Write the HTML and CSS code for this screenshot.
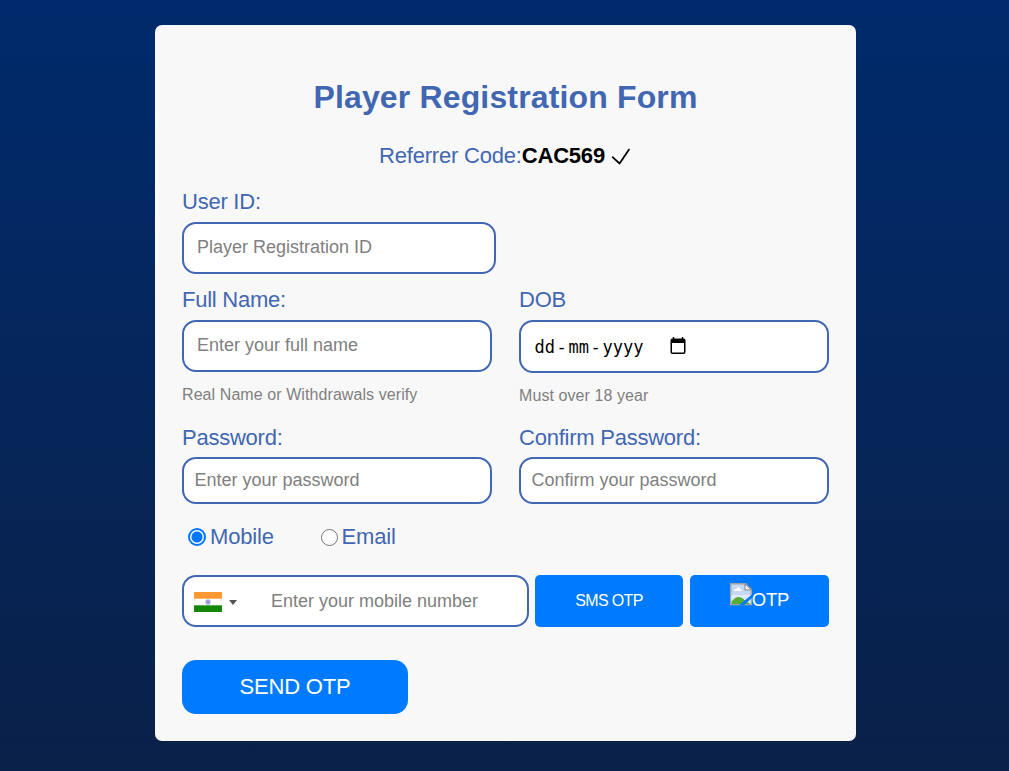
FILE: index.html
```html
<!DOCTYPE html>
<html lang="en">
<head>
<meta charset="utf-8">
<title>Player Registration Form</title>
<link rel="stylesheet" href="styles.css">
</head>
<body>
<form class="card">
  <h1 class="title">Player Registration Form</h1>
  <p class="referrer">Referrer Code:<b class="code">CAC569</b><svg class="check" width="20" height="18" viewBox="0 0 20 18"><path d="M1.600 9.200L8.600 15.500L18 1.500" fill="none" stroke="#000" stroke-width="1.700" stroke-linecap="round" stroke-linejoin="round"/></svg></p>
  <div class="field user">
    <label class="label">User ID:</label>
    <input class="input" type="text" placeholder="Player Registration ID">
  </div>
  <div class="row names">
    <div class="field">
      <label class="label">Full Name:</label>
      <input class="input" type="text" placeholder="Enter your full name">
      <span class="hint">Real Name or Withdrawals verify</span>
    </div>
    <div class="field">
      <label class="label">DOB</label>
      <div class="input date"><span>dd</span><span class="dash">-</span><span>mm</span><span class="dash">-</span><span>yyyy</span><svg class="calendar" width="16" height="18" viewBox="0 0 16 18"><path d="M3.500 0v3M12.500 0v3" stroke="#000" stroke-width="1.500"/><rect x="1.250" y="2.300" width="13.500" height="14" rx="1" fill="none" stroke="#000" stroke-width="1.500"/><path d="M1 2h14v4H1z"/></svg></div>
      <span class="hint">Must over 18 year</span>
    </div>
  </div>
  <div class="row passwords">
    <div class="field">
      <label class="label">Password:</label>
      <input class="input short" type="password" placeholder="Enter your password">
    </div>
    <div class="field">
      <label class="label">Confirm Password:</label>
      <input class="input short" type="password" placeholder="Confirm your password">
    </div>
  </div>
  <div class="choices">
    <label class="choice mobile"><span class="radio on"></span>Mobile</label>
    <label class="choice"><span class="radio"></span>Email</label>
  </div>
  <div class="contact">
    <div class="phone">
      <svg class="flag" width="28" height="20" viewBox="0 0 28 20"><path fill="#ff9933" d="M0 0h28v7H0z"/><path fill="#fff" d="M0 6.700h28v6.600H0z"/><path fill="#128807" d="M0 13.300h28V20H0z"/><circle cx="14" cy="10" r="2.500" fill="#9696d2" stroke="#c8c8e8" stroke-width="1"/><path d="M.25 6.500v7M27.750 6.500v7" stroke="#ddd" stroke-width=".5"/></svg>
      <span class="caret"></span>
      <input class="number" type="text" placeholder="Enter your mobile number">
    </div>
    <button class="otp sms" type="button">SMS OTP</button>
    <button class="otp alt" type="button"><svg class="broken" width="22" height="23" viewBox="0 0 22 23"><path d="M.7.700h14.800l5.800 5.800v15.100H.7z" fill="#c5d9f7" stroke="#a3a3a3" stroke-width="1.400"/><path d="M1.400 12h19.200v9H1.400z" fill="#e0eafc"/><path d="M4 8c0-2 2-2 2.500-2C7 3.500 10 4 10 6c2 0 2 2 1 2z" fill="#fff"/><path d="M1.400 20.900v-2c4-6 9-6 13-2l6 4z" fill="#56ad36"/><path d="M15 .7v6.200h6.300z" fill="#fff" stroke="#999" stroke-width="1.300"/><path d="M22 11.500v3.500l-8 7H9z" fill="#007bff"/></svg><span>OTP</span></button>
  </div>
  <button class="send" type="button">SEND OTP</button>
</form>
</body>
</html>
```
FILE: styles.css
```css
* { box-sizing: border-box; }
body {
  margin: 0;
  height: 771px;
  overflow: hidden;
  padding: 25px 153px 30px 155px;
  font-family: "Liberation Sans", Arial, sans-serif;
  background: linear-gradient(#002a6c, #0a2149);
}
.card {
  height: 716px;
  padding: 49px 27px 27px;
  border-radius: 7px;
  background: #f8f8f8;
  color: #4267b2;
}
.title { margin: 0; height: 46px; line-height: 46px; font-size: 32px; letter-spacing: .15px; text-align: center; }
.referrer { margin: 22px 0 0; height: 28px; line-height: 28px; font-size: 22px; text-align: center; white-space: nowrap; letter-spacing: -.2px; }
.code { color: #000; }
.check { margin-left: 6px; margin-right: 1px; vertical-align: -3px; }
.field { display: flex; flex-direction: column; }
.label { height: 26px; line-height: 26px; margin-bottom: 7px; font-size: 22px; letter-spacing: -.24px; }
.input {
  width: 100%;
  height: 52px;
  padding: 0 13px 2px;
  border: 2px solid #4267b2;
  border-radius: 14px;
  background: #fff;
  font: 18px "Liberation Sans", Arial, sans-serif;
}
.user { width: 314px; margin-top: 19px; }
.row { display: grid; grid-template-columns: 310px 310px; gap: 27px; }
.names { margin-top: 13px; }
.hint { margin-top: 12px; line-height: 21px; font-size: 16px; letter-spacing: .08px; color: #808080; }
.date { display: flex; align-items: center; height: 53px; padding: 0 14px 0 13.500px; color: #000; font: 17px "DejaVu Sans Mono", monospace; }
.dash { width: 13.500px; text-align: center; }
.calendar { margin-left: 27px; margin-bottom: 1px; }
.passwords { margin-top: 19px; }
.passwords .label { margin-bottom: 6px; }
.short { height: 47px; padding: 0 10.500px 1px; }
.choices { display: flex; margin-top: 20px; padding-left: 6px; height: 26px; font-size: 22px; line-height: 26px; letter-spacing: -.15px; }
.choice { display: flex; align-items: center; gap: 4px; }
.mobile { width: 132.500px; }
.radio { width: 17px; height: 17px; flex: none; border: 1.500px solid #767676; border-radius: 50%; background: #fff; }
.on { width: 18px; height: 18px; border: 2px solid #0075ff; background: radial-gradient(circle, #0075ff 5px, #fff 6px); }
.contact { display: flex; margin-top: 25px; height: 52px; }
.phone { display: flex; align-items: center; width: 347px; padding: 2px 10px 0; border: 2px solid #4267b2; border-radius: 14px; background: #fff; }
.caret { width: 0; height: 0; margin-left: 7px; border: 4px solid transparent; border-top: 5px solid #555; border-bottom: 0; }
.number { min-width: 0; flex: 1; margin: 0 0 2px 34px; padding: 0; border: 0; font: 18px "Liberation Sans", Arial, sans-serif; }
::placeholder { color: #808080; }
.otp { border: 0; border-radius: 5px; padding: 0; background: #007bff; color: #fff; font-family: inherit; }
.sms { width: 148px; margin: 0 7px 0 6px; font-size: 16px; letter-spacing: -.65px; }
.alt { display: flex; justify-content: center; width: 139px; padding-top: 8px; font-size: 18.500px; line-height: 33px; letter-spacing: -.2px; }
.send { display: block; width: 226px; height: 54px; margin-top: 33px; border: 0; border-radius: 14px; background: #007bff; color: #fff; font: 22px "Liberation Sans", Arial, sans-serif; letter-spacing: -.2px; }
```
